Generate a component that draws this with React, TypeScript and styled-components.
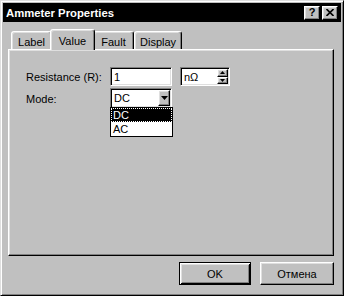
import React from "react";
import styled, { createGlobalStyle, css } from "styled-components";

const GlobalStyle = createGlobalStyle`
  html, body { margin: 0; padding: 0; background: #c0c0c0; }
  body { font-family: "Liberation Sans", Arial, sans-serif; font-size: 11px; color: #000; }
  * { box-sizing: border-box; }
`;

const raised = css`
  border-style: solid;
  border-width: 1px;
  border-color: #fff #000 #000 #fff;
  box-shadow: inset -1px -1px #808080, inset 1px 1px #dfdfdf;
`;

const sunken = css`
  border-style: solid;
  border-width: 1px;
  border-color: #808080 #fff #fff #808080;
  box-shadow: inset 1px 1px #000, inset -1px -1px #dfdfdf;
`;

const Window = styled.div`
  width: 344px;
  height: 296px;
  background: #c0c0c0;
  border: 1px solid;
  border-color: #dfdfdf #000 #000 #dfdfdf;
  box-shadow: inset 1px 1px #fff, inset -1px -1px #808080;
  padding: 2px;
  display: flex;
  flex-direction: column;
`;

const TitleBar = styled.div`
  height: 19px;
  background: #000;
  color: #fff;
  display: flex;
  align-items: center;
  padding: 0 3px 0 3px;
`;

const Title = styled.div`
  flex: 1;
  font-weight: bold;
  font-size: 11.3px;
`;

const TitleButtons = styled.div`
  display: flex;
  gap: 2px;
`;

const TitleButton = styled.div`
  width: 16px;
  height: 14px;
  background: #c0c0c0;
  ${raised};
  display: flex;
  align-items: center;
  justify-content: center;
  color: #000;
  font-weight: bold;
  font-size: 11px;
  line-height: 1;
`;

const Body = styled.div`
  flex: 1;
  display: flex;
  flex-direction: column;
  padding: 7px 7px 8px 5px;
`;

const TabRow = styled.div`
  height: 20px;
  display: flex;
  align-items: flex-end;
  padding-left: 3px;
  position: relative;
  z-index: 1;
`;

const Tab = styled.div<{ $active?: boolean }>`
  min-width: ${(p) => (p.$active ? "45px" : "41px")};
  height: ${(p) => (p.$active ? "21px" : "18px")};
  padding: ${(p) => (p.$active ? "1px 7px 0" : "2px 5px 0")};
  margin: ${(p) => (p.$active ? "0 -2px -1px" : "0")};
  background: #c0c0c0;
  border-style: solid;
  border-width: 1px 1px 0 1px;
  border-color: #fff #000 transparent #fff;
  border-radius: 3px 3px 0 0;
  box-shadow: inset -1px 0 #808080, inset 1px 1px #dfdfdf;
  display: flex;
  align-items: center;
  justify-content: center;
  position: relative;
  z-index: ${(p) => (p.$active ? 2 : 1)};
`;

const Panel = styled.div`
  flex: 1;
  ${raised};
  padding: 17px 0 0 17px;
`;

const Form = styled.div`
  display: grid;
  grid-template-columns: 84px auto;
  row-gap: 2px;
  align-items: center;
`;

const FieldLabel = styled.div`
  padding-top: 1px;
`;

const FieldGroup = styled.div`
  display: flex;
  gap: 8px;
  align-items: center;
`;

const TextField = styled.div<{ $width: number }>`
  width: ${(p) => p.$width}px;
  height: 19px;
  background: #fff;
  ${sunken};
  display: flex;
  align-items: center;
  padding-left: 3px;
  position: relative;
`;

const FieldText = styled.span`
  flex: 1;
`;

const Spinner = styled.div`
  width: 11px;
  height: 15px;
  margin-right: 1px;
  display: flex;
  flex-direction: column;
`;

const SpinButton = styled.div`
  flex: 1;
  background: #c0c0c0;
  ${raised};
  display: flex;
  align-items: center;
  justify-content: center;
`;

const Combo = styled.div`
  width: 62px;
  height: 20px;
  background: #fff;
  ${sunken};
  display: flex;
  align-items: center;
  padding-left: 3px;
  position: relative;
`;

const ComboArrow = styled.div`
  width: 12px;
  height: 16px;
  margin-right: 1px;
  background: #c0c0c0;
  ${raised};
  display: flex;
  align-items: center;
  justify-content: center;
`;

const DropList = styled.div`
  position: absolute;
  left: -1px;
  top: 18px;
  width: 63px;
  background: #fff;
  border: 1px solid #000;
  padding: 0;
  z-index: 5;
`;

const DropItem = styled.div<{ $selected?: boolean }>`
  height: 14px;
  line-height: 14px;
  padding-left: 2px;
  background: ${(p) => (p.$selected ? "#000" : "#fff")};
  color: ${(p) => (p.$selected ? "#fff" : "#000")};
  outline: ${(p) => (p.$selected ? "1px dotted #fff" : "none")};
  outline-offset: -1px;
`;

const Footer = styled.div`
  display: flex;
  justify-content: flex-end;
  gap: 9px;
  margin-top: 6px;
`;

const Button = styled.div<{ $width: number; $default?: boolean }>`
  width: ${(p) => p.$width}px;
  height: 23px;
  background: #c0c0c0;
  display: flex;
  align-items: center;
  justify-content: center;
  border: 1px solid;
  ${(p) =>
    p.$default
      ? css`
          border-color: #000;
          box-shadow: inset 1px 1px #fff, inset -1px -1px #000, inset 2px 2px #dfdfdf,
            inset -2px -2px #808080;
        `
      : css`
          border-color: #fff #000 #000 #fff;
          box-shadow: inset -1px -1px #808080, inset 1px 1px #dfdfdf;
        `}
`;

const DownTriangle = ({ w = 7, h = 4 }: { w?: number; h?: number }) => (
  <svg width={w} height={h} viewBox={`0 0 ${w} ${h}`}>
    <polygon points={`0,0 ${w},0 ${w / 2},${h}`} fill="#000" />
  </svg>
);

const UpTriangle = ({ w = 5, h = 3 }: { w?: number; h?: number }) => (
  <svg width={w} height={h} viewBox={`0 0 ${w} ${h}`}>
    <polygon points={`0,${h} ${w},${h} ${w / 2},0`} fill="#000" />
  </svg>
);

const CloseGlyph = () => (
  <svg width="8" height="7" viewBox="0 0 8 7">
    <path d="M0.5 0 L7.5 7 M7.5 0 L0.5 7" stroke="#000" strokeWidth="1.6" />
  </svg>
);

export default function App() {
  return (
    <>
      <GlobalStyle />
      <Window>
        <TitleBar>
          <Title>Ammeter Properties</Title>
          <TitleButtons>
            <TitleButton>?</TitleButton>
            <TitleButton>
              <CloseGlyph />
            </TitleButton>
          </TitleButtons>
        </TitleBar>
        <Body>
          <TabRow>
            <Tab>Label</Tab>
            <Tab $active>Value</Tab>
            <Tab>Fault</Tab>
            <Tab>Display</Tab>
          </TabRow>
          <Panel>
            <Form>
              <FieldLabel>Resistance (R):</FieldLabel>
              <FieldGroup>
                <TextField $width={62}>
                  <FieldText>1</FieldText>
                </TextField>
                <TextField $width={50}>
                  <FieldText>nΩ</FieldText>
                  <Spinner>
                    <SpinButton>
                      <UpTriangle />
                    </SpinButton>
                    <SpinButton>
                      <DownTriangle w={5} h={3} />
                    </SpinButton>
                  </Spinner>
                </TextField>
              </FieldGroup>
              <FieldLabel>Mode:</FieldLabel>
              <FieldGroup>
                <Combo>
                  <FieldText>DC</FieldText>
                  <ComboArrow>
                    <DownTriangle />
                  </ComboArrow>
                  <DropList>
                    <DropItem $selected>DC</DropItem>
                    <DropItem>AC</DropItem>
                  </DropList>
                </Combo>
              </FieldGroup>
            </Form>
          </Panel>
          <Footer>
            <Button $width={72} $default>
              OK
            </Button>
            <Button $width={74}>Отмена</Button>
          </Footer>
        </Body>
      </Window>
    </>
  );
}
